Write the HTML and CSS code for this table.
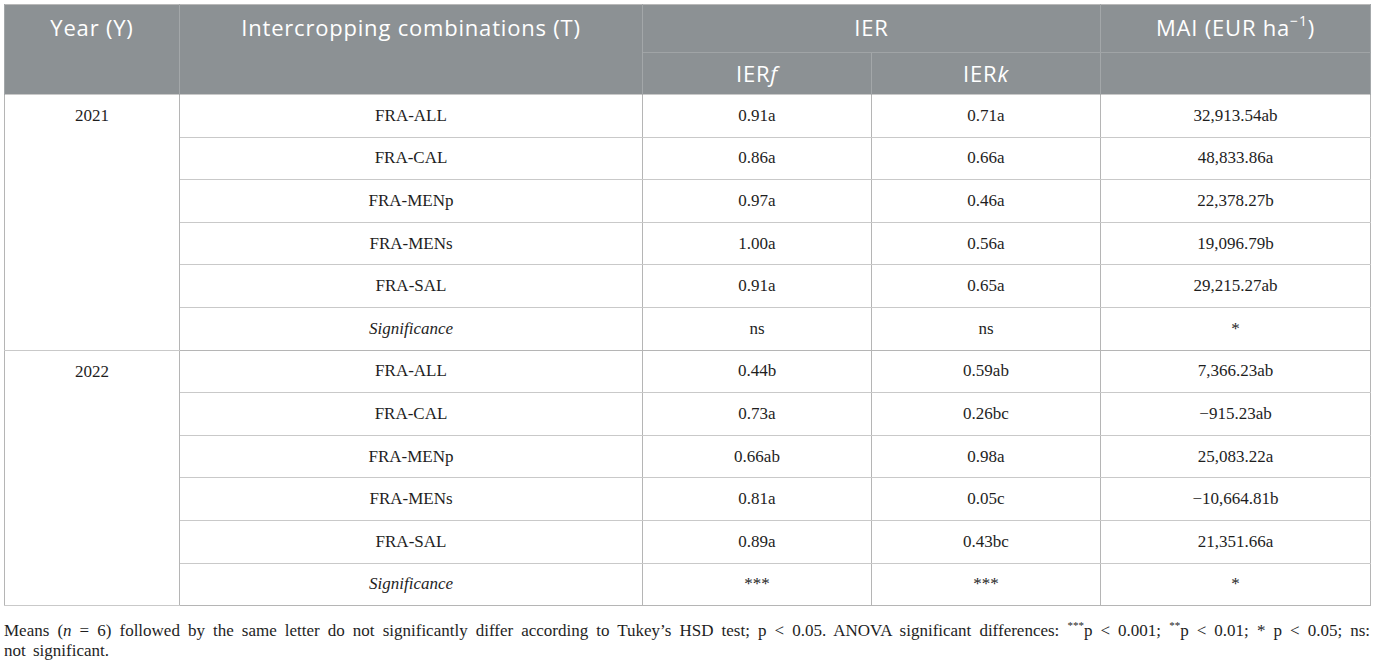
FILE: index.html
```html
<!DOCTYPE html>
<html>
<head>
<meta charset="utf-8">
<link rel="stylesheet" href="styles.css">
</head>
<body>
<div class="wrap">
<table class="tbl">
  <colgroup>
    <col class="c1"><col class="c2"><col class="c3"><col class="c4"><col class="c5">
  </colgroup>
  <thead>
    <tr class="h1">
      <th rowspan="2">Year (Y)</th>
      <th rowspan="2">Intercropping combinations (T)</th>
      <th colspan="2">IER</th>
      <th>MAI (EUR ha<sup>−1</sup>)</th>
    </tr>
    <tr class="h2">
      <th>IER<i>f</i></th>
      <th>IER<i>k</i></th>
      <th></th>
    </tr>
  </thead>
  <tbody>
    <tr><td rowspan="6" class="yr">2021</td><td>FRA-ALL</td><td>0.91a</td><td>0.71a</td><td>32,913.54ab</td></tr>
    <tr><td>FRA-CAL</td><td>0.86a</td><td>0.66a</td><td>48,833.86a</td></tr>
    <tr><td>FRA-MENp</td><td>0.97a</td><td>0.46a</td><td>22,378.27b</td></tr>
    <tr><td>FRA-MENs</td><td>1.00a</td><td>0.56a</td><td>19,096.79b</td></tr>
    <tr><td>FRA-SAL</td><td>0.91a</td><td>0.65a</td><td>29,215.27ab</td></tr>
    <tr class="last"><td><i>Significance</i></td><td>ns</td><td>ns</td><td>*</td></tr>
    <tr><td rowspan="6" class="yr">2022</td><td>FRA-ALL</td><td>0.44b</td><td>0.59ab</td><td>7,366.23ab</td></tr>
    <tr><td>FRA-CAL</td><td>0.73a</td><td>0.26bc</td><td>−915.23ab</td></tr>
    <tr><td>FRA-MENp</td><td>0.66ab</td><td>0.98a</td><td>25,083.22a</td></tr>
    <tr><td>FRA-MENs</td><td>0.81a</td><td>0.05c</td><td>−10,664.81b</td></tr>
    <tr><td>FRA-SAL</td><td>0.89a</td><td>0.43bc</td><td>21,351.66a</td></tr>
    <tr class="last"><td><i>Significance</i></td><td>***</td><td>***</td><td>*</td></tr>
  </tbody>
</table>
<p class="note">Means (<i>n</i> = 6) followed by the same letter do not significantly differ according to Tukey’s HSD test; p &lt; 0.05. ANOVA significant differences: <sup>***</sup>p &lt; 0.001; <sup>**</sup>p &lt; 0.01; * p &lt; 0.05; ns: not significant.</p>
</div>
</body>
</html>
```
FILE: styles.css
```css
html, body {
  margin: 0;
  padding: 0;
  background: #ffffff;
}
.wrap {
  padding: 4px 6px 0 4px;
}
.tbl {
  width: 1366px;
  border-collapse: collapse;
  table-layout: fixed;
  border: 1px solid #b9b9b9;
}
.c1 { width: 175px; }
.c2 { width: 463px; }
.c3 { width: 229px; }
.c4 { width: 229px; }
.c5 { width: 270px; }
.tbl th {
  background: #8c9194;
  color: #ffffff;
  font-family: "Open Sans", "Noto Sans", sans-serif;
  font-weight: 400;
  font-size: 22px;
  letter-spacing: 0.8px;
  text-align: center;
  vertical-align: top;
  padding: 7px 4px 0;
  border-left: 1px solid #a3a7a9;
  border-right: 1px solid #a3a7a9;
  line-height: 30px;
}
.tbl th i {
  font-style: italic;
}
.tbl th sup {
  font-size: 14px;
  line-height: 0;
  position: relative;
  top: -2px;
}
.tbl .h1 th {
  height: 40px;
}
.tbl .h1 th[colspan], .tbl .h1 th:last-child {
  border-bottom: 1px solid #a0a4a6;
}
.tbl .h2 th {
  height: 36px;
  padding-top: 5px;
}
.tbl td {
  font-family: "Liberation Serif", "Times New Roman", serif;
  font-size: 17px;
  color: #1e1e1e;
  text-align: center;
  vertical-align: middle;
  height: 42.6px;
  padding: 0 4px;
  border: 1px solid #c9c9c9;
  border-left: 1.5px solid #b5b5b5;
  border-right: 1.5px solid #b5b5b5;
  box-sizing: border-box;
}
.tbl td.yr {
  vertical-align: top;
  padding-top: 11px;
}
.tbl tr.last td {
  border-bottom: 1.5px solid #b5b5b5;
}
.note {
  margin: 15px 0 0 0;
  width: 1366px;
  font-family: "Liberation Serif", "Times New Roman", serif;
  font-size: 17px;
  word-spacing: 3px;
  line-height: 20px;
  color: #1e1e1e;
  text-align: justify;
}
.note sup {
  font-size: 11px;
  line-height: 0;
}
```
